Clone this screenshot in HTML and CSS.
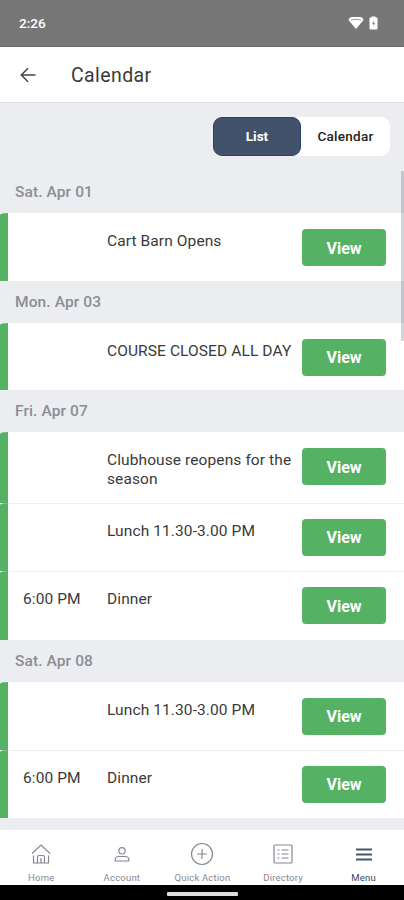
FILE: index.html
```
<!DOCTYPE html>
<html lang="en">
<head>
<meta charset="utf-8">
<title>Calendar</title>
<link rel="stylesheet" href="styles.css">
</head>
<body>
<div class="status">
  <span class="clock">2:26</span>
  <svg class="wifi" width="16" height="14" viewBox="0 0 16 14"><path d="M.5 4Q1.500 1 4 1h8q2.500 0 3.500 3L8 13Z" fill="#fff"/><path d="M3 4Q8 2.500 13 4" fill="none" stroke="#999" stroke-width="1"/></svg>
  <svg class="battery" width="9" height="14" viewBox="0 0 9 14"><path d="M2.500 1.500V.5h4v1H7.500Q8.500 1.500 8.500 2.500v10q0 1-1 1h-6q-1 0-1-1v-10q0-1 1-1z" fill="#fff"/><path d="M5 4.500L3.200 8h1.300v2.500L6 7H5z" fill="#888"/></svg>
</div>
<header class="topbar">
  <svg width="16" height="16" viewBox="0 0 16 16" fill="none" stroke="#444" stroke-width="1.500"><path d="M15.500 8H1.500M8 1.200L1.300 8L8 14.800"/></svg>
  <h1>Calendar</h1>
</header>
<main class="content">
  <div class="toggle-row"><div class="toggle"><span class="tab active">List</span><span class="tab">Calendar</span></div></div>
  <h2>Sat. Apr 01</h2>
  <section>
    <div class="event"><span class="time"></span><span class="name">Cart Barn Opens</span><button>View</button></div>
  </section>
  <h2>Mon. Apr 03</h2>
  <section>
    <div class="event"><span class="time"></span><span class="name">COURSE CLOSED ALL DAY</span><button>View</button></div>
  </section>
  <h2>Fri. Apr 07</h2>
  <section>
    <div class="event tall"><span class="time"></span><span class="name">Clubhouse reopens for the<br>season</span><button>View</button></div>
    <div class="event"><span class="time"></span><span class="name">Lunch 11.30-3.00 PM</span><button>View</button></div>
    <div class="event"><span class="time">6:00 PM</span><span class="name">Dinner</span><button>View</button></div>
  </section>
  <h2>Sat. Apr 08</h2>
  <section>
    <div class="event"><span class="time"></span><span class="name">Lunch 11.30-3.00 PM</span><button>View</button></div>
    <div class="event"><span class="time">6:00 PM</span><span class="name">Dinner</span><button>View</button></div>
  </section>
  <div class="scrollbar"></div>
</main>
<nav class="tabs">
  <a><svg width="24" height="24" viewBox="0 0 24 24"><path d="M3 11.500L12 3l9 8.500M4.500 13.500V21h15v-7.500M8.500 21v-6q0-1.500 1.500-1.500h4q1.500 0 1.500 1.500v6M12 16v5"/></svg>Home</a>
  <a><svg width="24" height="24" viewBox="0 0 24 24"><circle cx="12" cy="8.800" r="3.200"/><path d="M5.300 19v-1.500q0-3 3.500-3h6.400q3.500 0 3.500 3V19z"/></svg>Account</a>
  <a><svg width="24" height="24" viewBox="0 0 24 24"><circle cx="12" cy="12" r="10.500"/><path d="M12 7v10M7 12h10"/></svg>Quick Action</a>
  <a><svg width="24" height="24" viewBox="0 0 24 24"><rect x="3" y="3" width="18" height="18" rx="1"/><path d="M6.500 8h2M10.500 8h7M6.500 12h2M10.500 12h7M6.500 16h2M10.500 16h7"/></svg>Directory</a>
  <a class="current"><svg width="24" height="24" viewBox="0 0 24 24"><path d="M4 7.500h16M4 12.500h16M4 17.500h16"/></svg>Menu</a>
</nav>
<div class="system"><div class="handle"></div></div>
</body>
</html>
```
FILE: styles.css
```
* { box-sizing: border-box; }
body {
  margin: 0;
  width: 404px;
  height: 900px;
  overflow: hidden;
  display: flex;
  flex-direction: column;
  background: #ebedf1;
  font-family: Roboto, "Liberation Sans", sans-serif;
  color: #3a3a3a;
}
.status {
  height: 46.500px;
  flex: none;
  display: flex;
  align-items: center;
  padding: 0 26px 0 19px;
  background: #777;
  border-bottom: 1px solid #696969;
}
.clock { color: #fff; font-size: 13.500px; font-weight: 500; margin-right: auto; letter-spacing: 0; }
.battery { margin-left: 5px; }
.topbar {
  height: 56px;
  flex: none;
  display: flex;
  align-items: center;
  gap: 35px;
  padding: 1px 0 0 20px;
  background: #fff;
  border-bottom: 1px solid #dcdee1;
}
h1 { margin: 1px 0 0; font-size: 19.500px; font-weight: 400; letter-spacing: .4px; }
.content { position: relative; flex: 1; min-height: 0; }
.toggle-row { height: 68.500px; padding: 14px 14px 0 0; display: flex; justify-content: flex-end; }
.toggle { display: flex; width: 177px; height: 39px; border-radius: 9px; background: #fff; }
.tab { flex: 1; display: flex; align-items: center; justify-content: center; font-size: 13.500px; font-weight: 500; color: #222; letter-spacing: .25px; }
.tab.active { flex: none; width: 88px; border-radius: 9px; background: #43526b; border: 1px solid #294466; color: #fff; font-weight: 700; letter-spacing: 0; }
h2 {
  margin: 0;
  height: 42px;
  padding-left: 15px;
  line-height: 42px;
  font-size: 15.500px;
  font-weight: 500;
  letter-spacing: .1px;
  color: #8b8d96;
}
.event {
  display: flex;
  height: 67.700px;
  padding: 16px 18px 0 15px;
  background: #fff;
  border-left: 8px solid #55b164;
  font-size: 15.500px;
  line-height: 18.500px;
}
.event:first-child { border-top-left-radius: 8px 2px; }
.event + .event { height: 68.500px; box-shadow: inset 0 1px #eeeff1; border-top-left-radius: 8px 2px; }
.event.tall { height: 70.500px; }
.time { width: 84px; padding-top: 3px; white-space: nowrap; letter-spacing: .1px; }
.name { flex: 1; padding-top: 3px; white-space: nowrap; letter-spacing: .1px; }
button {
  flex: none;
  width: 84px;
  height: 37px;
  border: 0;
  border-radius: 4px;
  padding: 1px 0 0;
  background: #55b164;
  color: #fff;
  font: 700 16px Roboto, sans-serif;
  letter-spacing: 0;
}
.scrollbar { position: absolute; top: 68px; right: 0; width: 3px; height: 170px; background: rgba(80, 85, 95, .25); }
.tabs {
  height: 54.500px;
  flex: none;
  display: flex;
  background: #fff;
  overflow: hidden;
  padding-left: 1px;
}
.tabs a {
  flex: 1;
  display: flex;
  flex-direction: column;
  align-items: center;
  gap: 5px;
  padding-top: 12px;
  font-size: 9.500px;
  line-height: 13px;
  letter-spacing: .2px;
  white-space: nowrap;
  color: #858890;
}
.tabs svg { flex: none; fill: none; stroke: #858890; stroke-width: 1.200; }
.tabs .current { color: #3b4557; }
.tabs .current svg { stroke: #46566a; stroke-width: 1.800; }
.system { height: 15.500px; flex: none; display: flex; justify-content: center; padding-top: 7px; background: #000; }
.handle { width: 71px; height: 4px; border-radius: 1px; background: #ddd; }
```
